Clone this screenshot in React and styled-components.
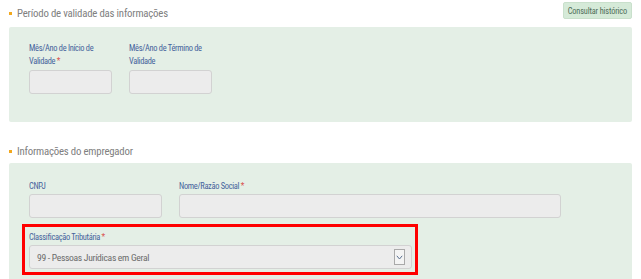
import React from "react";
import styled, { createGlobalStyle } from "styled-components";

const Global = createGlobalStyle`
  html, body { margin: 0; padding: 0; background: #fff; overflow: hidden; }
  body { font-family: "Liberation Sans Narrow", "Roboto Condensed", Roboto, sans-serif; }
`;

const Page = styled.div`
  width: 623px;
  margin-left: 9px;
`;

const SectionHeader = styled.div`
  display: flex;
  align-items: center;
  justify-content: space-between;
  height: ${(p) => p.$h}px;
  margin-top: ${(p) => p.$top || 0}px;
`;

const Title = styled.h2`
  display: flex;
  align-items: center;
  margin: 0;
  font-weight: 400;
  font-size: 10.8px;
  letter-spacing: -0.2px;
  color: #808080;
  &::before {
    content: "";
    width: 3px;
    height: 3px;
    background: #f2a81d;
    margin-right: 5px;
  }
`;

const HistoryButton = styled.button`
  align-self: flex-start;
  margin-top: 2px;
  height: 17px;
  padding: 0 4px;
  border: 1px solid #c9e0cc;
  border-radius: 2px;
  background: #d5ead8;
  color: #4f6d58;
  font-family: inherit;
  font-size: 8.3px;
  letter-spacing: -0.15px;
`;

const Panel = styled.div`
  background: #e4efe6;
  border-radius: 2px;
  padding: ${(p) => p.$pad};
  min-height: ${(p) => p.$minH || 0}px;
  box-sizing: border-box;
`;

const Row = styled.div`
  display: flex;
  gap: 17px;
  align-items: flex-end;
`;

const Field = styled.div`
  display: flex;
  flex-direction: column;
  width: ${(p) => p.$w}px;
`;

const Label = styled.label`
  font-size: 8.4px;
  line-height: 13px;
  letter-spacing: -0.3px;
  color: #45639c;
  margin-bottom: ${(p) => p.$mb ?? 1}px;
  padding-right: ${(p) => p.$pr || 0}px;
  & span { color: #d9534f; margin-left: 1.5px; }
`;

const Input = styled.div`
  height: 24px;
  box-sizing: border-box;
  background: #ececec;
  border: 1px solid #d2d2d2;
  border-radius: 3px;
`;

const Highlight = styled.div`
  margin-top: 6px;
  margin-left: -7px;
  width: 396px;
  box-sizing: border-box;
  border: 3px solid #ff0000;
  padding: 4px 3px 3px 4px;
`;

const Select = styled.div`
  display: flex;
  align-items: center;
  justify-content: space-between;
  height: 24px;
  box-sizing: border-box;
  background: #ececec;
  border: 1px solid #d2d2d2;
  border-radius: 3px;
  padding: 0 6px 0 7px;
  font-size: 9.6px;
  letter-spacing: -0.3px;
  color: #6b6b6b;
`;

const Arrow = styled.span`
  display: flex;
  align-items: center;
  justify-content: center;
  width: 11px;
  height: 16px;
  box-sizing: border-box;
  border: 1px solid #a9a9a9;
  background: #f4f4f4;
`;

export default function App() {
  return (
    <Page>
      <Global />
      <SectionHeader $h={27}>
        <Title>Período de validade das informações</Title>
        <HistoryButton>Consultar histórico</HistoryButton>
      </SectionHeader>
      <Panel $pad="15px 20px 28px" $minH={94}>
        <Row>
          <Field $w={83}>
            <Label $mb={2} $pr={12}>
              Mês/Ano de Início de Validade<span>*</span>
            </Label>
            <Input />
          </Field>
          <Field $w={83}>
            <Label $mb={2}>Mês/Ano de Término de Validade</Label>
            <Input />
          </Field>
        </Row>
      </Panel>
      <SectionHeader $h={24} $top={17}>
        <Title>Informações do empregador</Title>
      </SectionHeader>
      <Panel $pad="17px 20px 20px">
        <Row>
          <Field $w={133}>
            <Label>CNPJ</Label>
            <Input />
          </Field>
          <Field $w={382}>
            <Label>
              Nome/Razão Social<span>*</span>
            </Label>
            <Input />
          </Field>
        </Row>
        <Highlight>
          <Field $w={383}>
            <Label>
              Classificação Tributária<span>*</span>
            </Label>
            <Select>
              99 - Pessoas Jurídicas em Geral
              <Arrow>
                <svg width="7" height="5" viewBox="0 0 7 5">
                  <path d="M0.8 0.8 L3.5 4 L6.2 0.8" fill="none" stroke="#5a6f8f" strokeWidth="1" />
                </svg>
              </Arrow>
            </Select>
          </Field>
        </Highlight>
      </Panel>
    </Page>
  );
}
